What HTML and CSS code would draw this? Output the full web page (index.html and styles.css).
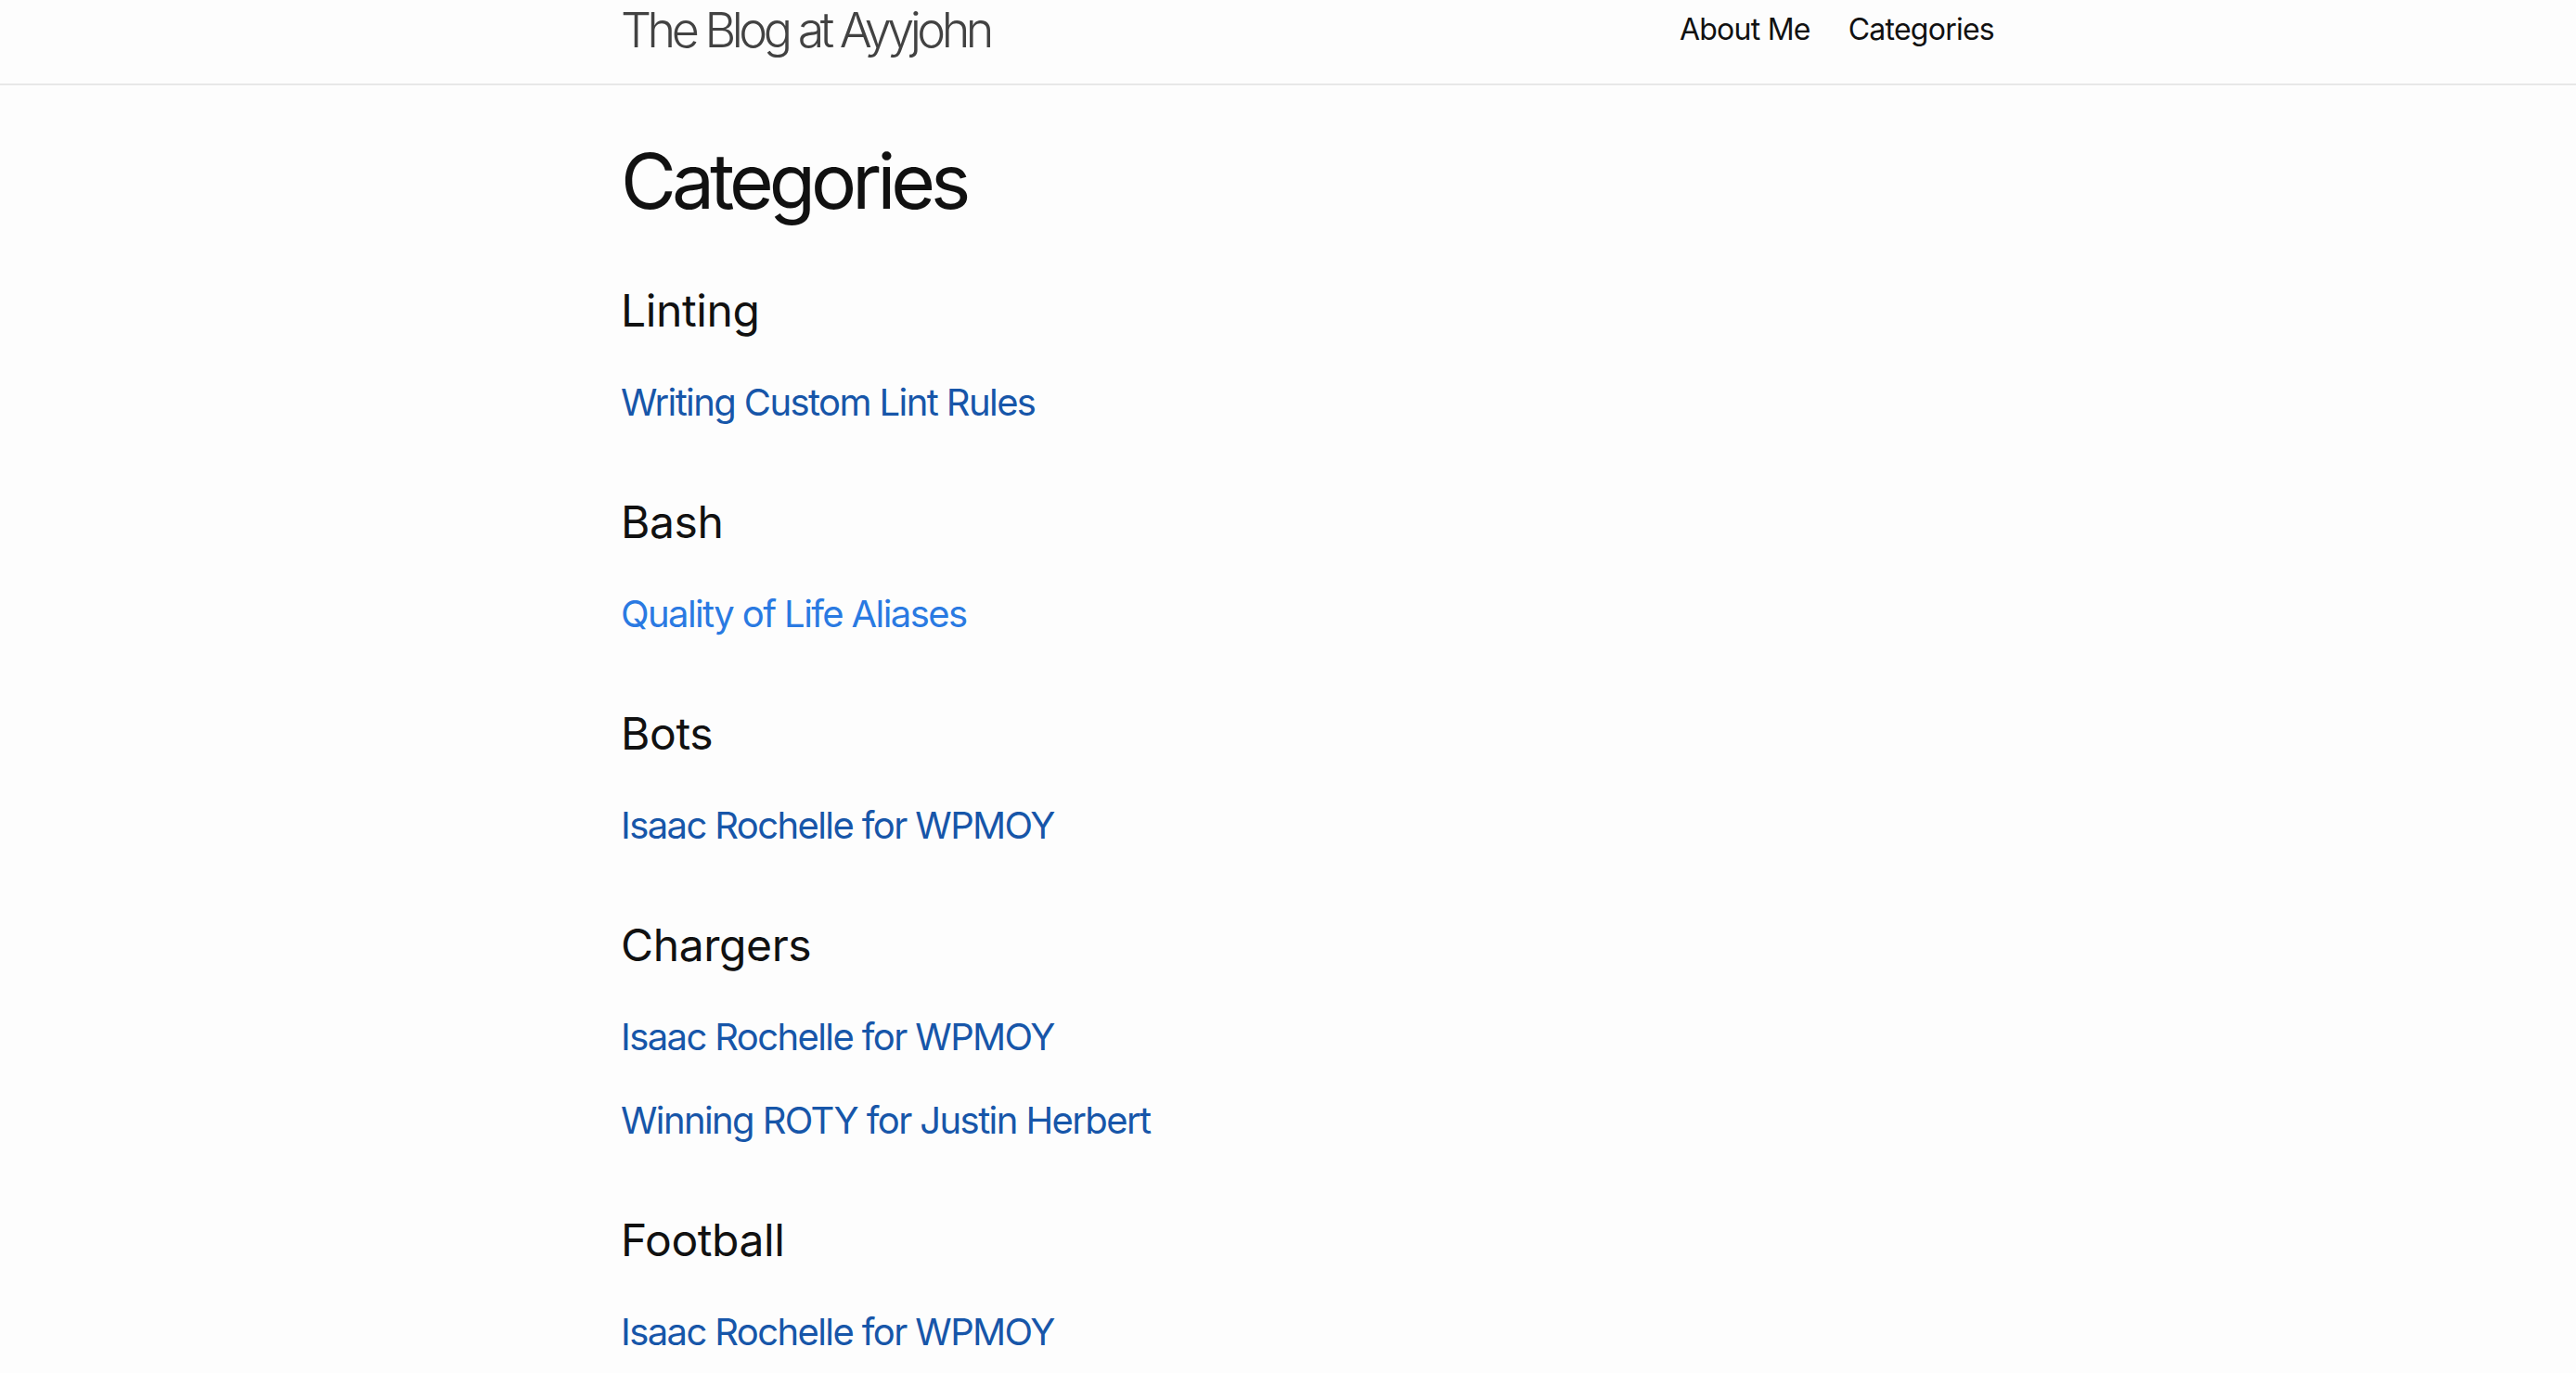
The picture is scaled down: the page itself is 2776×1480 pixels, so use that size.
FILE: index.html
```html
<!DOCTYPE html>
<html lang="en">
<head>
<meta charset="utf-8">
<title>Categories | The Blog at Ayyjohn</title>
<link rel="stylesheet" href="styles.css">
</head>
<body>
<header class="site-header">
  <div class="wrapper header-row">
    <a class="site-title" href="#">The Blog at Ayyjohn</a>
    <nav class="site-nav">
      <a class="page-link" href="#">About Me</a>
      <a class="page-link" href="#">Categories</a>
    </nav>
  </div>
</header>
<main class="page-content">
  <div class="wrapper">
    <h1 class="page-heading">Categories</h1>

    <section class="category">
      <h2 class="category-title">Linting</h2>
      <ul class="post-list">
        <li><a class="post-link visited" href="#">Writing Custom Lint Rules</a></li>
      </ul>
    </section>

    <section class="category">
      <h2 class="category-title">Bash</h2>
      <ul class="post-list">
        <li><a class="post-link" href="#">Quality of Life Aliases</a></li>
      </ul>
    </section>

    <section class="category">
      <h2 class="category-title">Bots</h2>
      <ul class="post-list">
        <li><a class="post-link visited" href="#">Isaac Rochelle for WPMOY</a></li>
      </ul>
    </section>

    <section class="category">
      <h2 class="category-title">Chargers</h2>
      <ul class="post-list">
        <li><a class="post-link visited" href="#">Isaac Rochelle for WPMOY</a></li>
        <li><a class="post-link visited" href="#">Winning ROTY for Justin Herbert</a></li>
      </ul>
    </section>

    <section class="category">
      <h2 class="category-title">Football</h2>
      <ul class="post-list">
        <li><a class="post-link visited" href="#">Isaac Rochelle for WPMOY</a></li>
      </ul>
    </section>
  </div>
</main>
</body>
</html>
```

FILE: styles.css
```css
* { box-sizing: border-box; }

html, body {
  margin: 0;
  padding: 0;
}

body {
  background: #fdfdfd;
  color: #111111;
  font-family: Inter, "Noto Sans", "Liberation Sans", sans-serif;
  font-weight: 400;
}

a { text-decoration: none; }

.wrapper {
  width: 1480px;
  margin-left: 669px;
}

.site-header {
  height: 92px;
  border-bottom: 2px solid #e8e8e8;
}

.header-row {
  display: flex;
  justify-content: space-between;
  align-items: flex-start;
  padding-top: 5px;
}

.site-title {
  font-size: 52px;
  line-height: 56px;
  font-weight: 300;
  letter-spacing: -4.5px;
  color: #424242;
}

.site-nav {
  display: flex;
  gap: 41px;
  margin-top: 3px;
}

.page-link {
  font-size: 32px;
  line-height: 48px;
  letter-spacing: -0.75px;
  color: #111111;
}

.page-content {
  padding-top: 63px;
}

.page-heading {
  margin: 0 0 68px 0;
  font-size: 82px;
  line-height: 82px;
  font-weight: 400;
  letter-spacing: -5px;
}

.category {
  margin-bottom: 69px;
}

.category-title {
  margin: 0 0 39px 0;
  font-size: 48px;
  line-height: 60px;
  font-weight: 400;
  letter-spacing: -0.4px;
}

.post-list {
  list-style: none;
  margin: 0;
  padding: 0;
  display: flex;
  flex-direction: column;
  gap: 30px;
}

.post-link {
  display: block;
  font-size: 40px;
  line-height: 60px;
  letter-spacing: -1.6px;
  color: #2a7ae2;
}

.post-link.visited {
  color: #1756a9;
}
```
